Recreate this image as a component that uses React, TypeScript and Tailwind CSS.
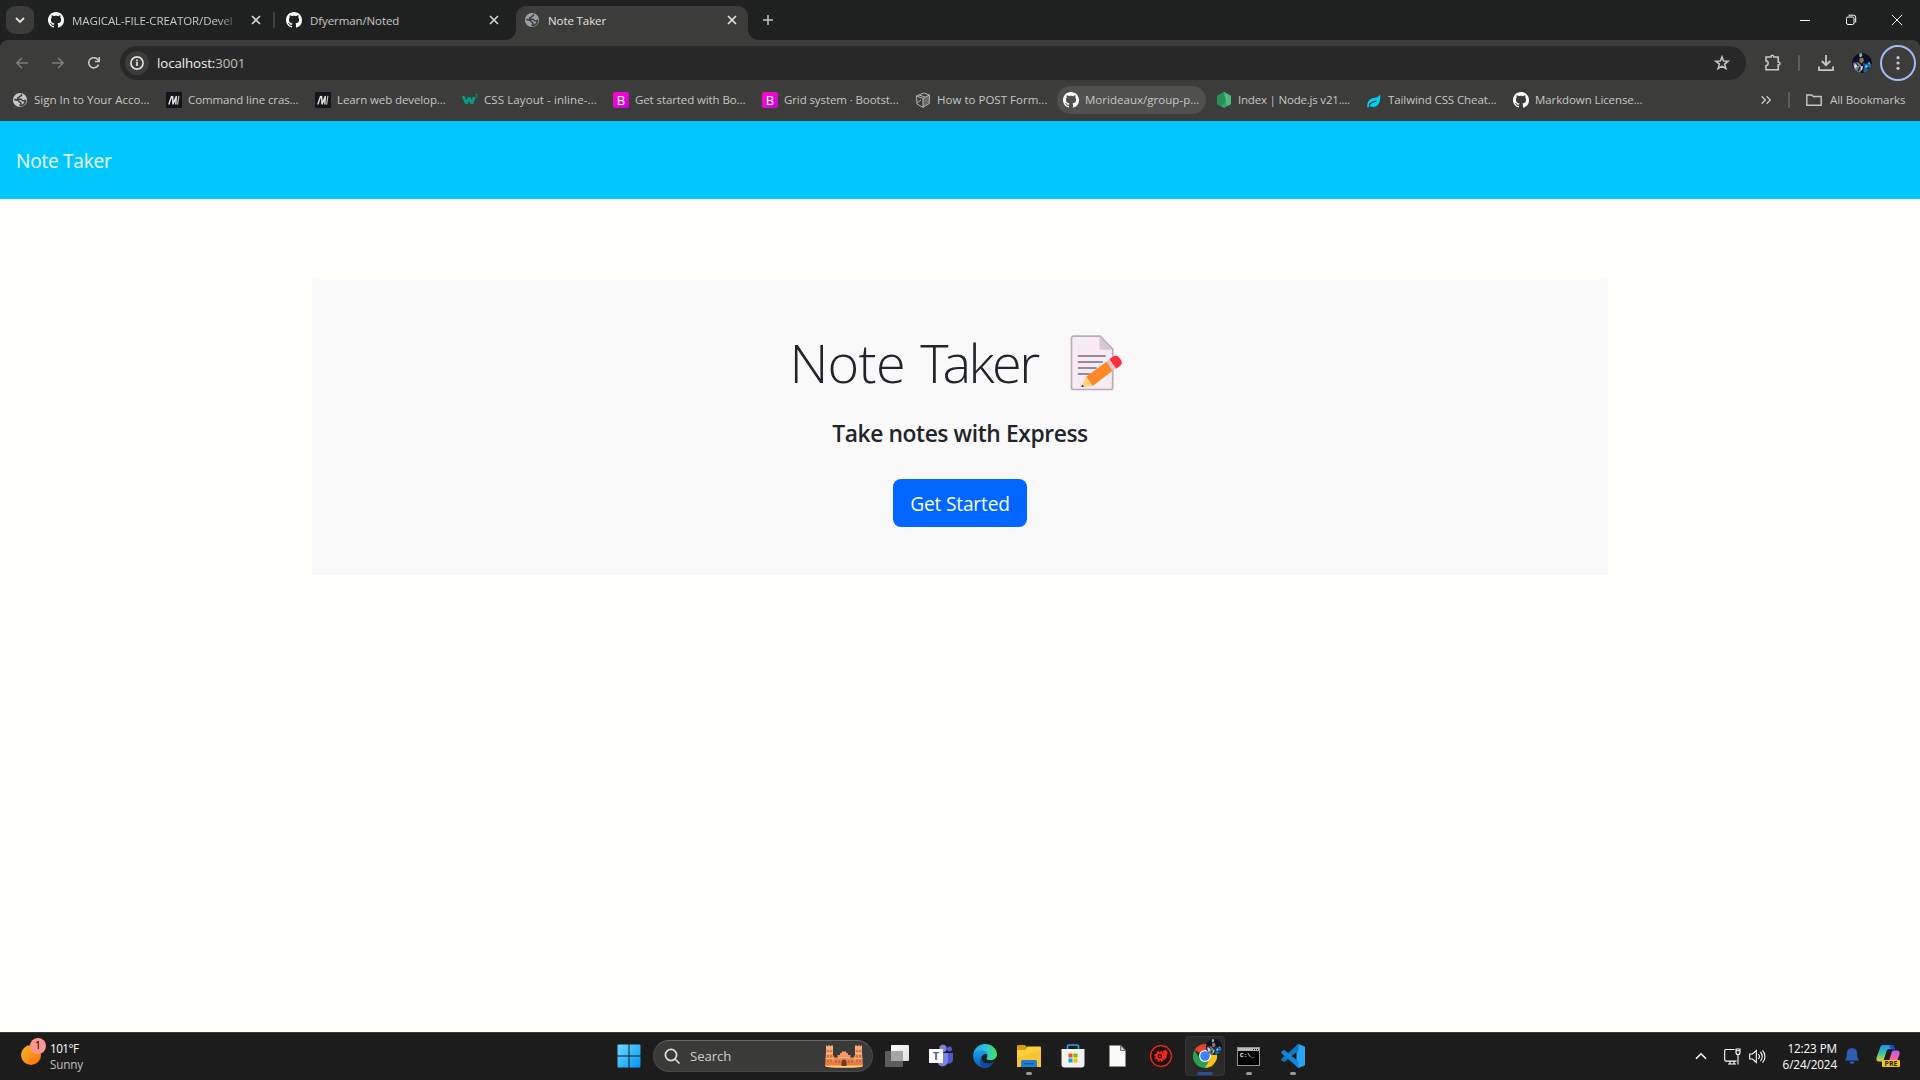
import React from "react";

type P = { className?: string };

const GitHub = ({ className = "" }: P) => (
  <svg viewBox="0 0 16 16" className={`size-4 shrink-0 ${className}`} fill="#fff">
    <path d="M8 0C3.58 0 0 3.58 0 8c0 3.54 2.29 6.53 5.47 7.59.4.07.55-.17.55-.38 0-.19-.01-.82-.01-1.49-2.01.37-2.53-.49-2.69-.94-.09-.23-.48-.94-.82-1.13-.28-.15-.68-.52-.01-.53.63-.01 1.08.58 1.23.82.72 1.21 1.87.87 2.33.66.07-.52.28-.87.51-1.07-1.78-.2-3.64-.89-3.64-3.95 0-.87.31-1.59.82-2.15-.08-.2-.36-1.02.08-2.12 0 0 .67-.21 2.2.82.64-.18 1.32-.27 2-.27s1.36.09 2 .27c1.53-1.04 2.2-.82 2.2-.82.44 1.1.16 1.92.08 2.12.51.56.82 1.27.82 2.15 0 3.07-1.87 3.75-3.65 3.95.29.25.54.73.54 1.48 0 1.07-.01 1.93-.01 2.2 0 .21.15.46.55.38A8.01 8.01 0 0 0 16 8c0-4.42-3.58-8-8-8Z" />
  </svg>
);

const Globe = ({ fill = "#c3c7cb", ink = "#3c3c3b" }: { fill?: string; ink?: string }) => (
  <svg viewBox="0 0 16 16" className="size-4 shrink-0">
    <circle cx="8" cy="8" r="7.1" fill={fill} />
    <path d="M9 2.300c1.200.8.300 1.700-.8 1.900-.9.200-.8 1.500-2 1.600-1 .2-.8 1.400.3 1.400h2.300c1.100 0 .9 1.600 2 1.600.8 0 1.500-.5 2.800-.3-.2 2.200-1.600 4.200-3.700 5H8.200c-.3-1.200 1-1.300.8-2.500-.2-1.100-2-.7-2.300-2C6.400 8 4.500 7.800 2.200 7.600" fill="none" stroke={ink} strokeWidth="1.500" />
  </svg>
);

const Close = ({ color = "#d5d5d3" }: { color?: string }) => (
  <svg viewBox="0 0 10 10" className="size-[10px] shrink-0" stroke={color} strokeWidth="1.6">
    <path d="M1 1l8 8M9 1L1 9" />
  </svg>
);

const Mdn = () => (
  <svg viewBox="0 0 16 16" className="size-4 shrink-0">
    <rect width="16" height="16" fill="#15141a" />
    <path d="M2.800 12.500L5.700 4M6.600 4l.4 8.500M7 12.300L10.500 4M10.300 4l-.5 8.500" stroke="#e8e8e8" strokeWidth="1.400" fill="none" />
    <path d="M12.900 3.800l-1.300 8.800" stroke="#c8c8c8" strokeWidth="1.100" />
  </svg>
);

const W3 = () => (
  <svg viewBox="0 0 16 16" className="size-4 shrink-0" fill="none" stroke="#04a08a">
    <path d="M1 4l3.400 7.500L7 5.500l2.800 6L12.300 5" strokeWidth="2.700" strokeLinejoin="bevel" />
    <path d="M13.300 2.600h2l-1.100 1.500c1.400 0 1.300 1.900-.9 1.600" strokeWidth=".8" />
  </svg>
);

const Boot = () => (
  <span className="flex size-4 shrink-0 items-center justify-center rounded-[2px] bg-linear-to-br from-[#ff00c8] to-[#c800d8] text-[13px] leading-4 font-medium text-white">B</span>
);

const Cube = () => (
  <svg viewBox="0 0 16 16" className="size-4 shrink-0" fill="none" stroke="#b5b5b3" strokeWidth="1" strokeLinejoin="round">
    <path d="M8 6.400l6.500-3.400-.3 8.500L8 15.300z" fill="#6a6a68" stroke="none" />
    <path d="M1.500 4L8.500 1l6 2-.3 8.500-6.200 3.800-6-3.300zM1.500 4L8 6.400l6.500-3.400M8 6.400v8.900M2.500 10.500L6 8M4 3l6 2" />
  </svg>
);

const Node = () => (
  <svg viewBox="0 0 16 16" className="size-4 shrink-0">
    <path d="M8 0l7 4v8l-7 4-7-4V4z" fill="#2ea866" />
    <path d="M8 0l7 4L5 14.300 1 12V4z" fill="#249257" />
    <path d="M8 0l7 4v8l-4 2.300z" fill="#55bb7d" />
  </svg>
);

const Leaf = () => (
  <svg viewBox="0 0 16 16" className="size-4 shrink-0">
    <path d="M14 2.500c1.200 6-1 12.500-7 12.500-1.800 0-3-.5-3.700-1.200L2.200 15.800 1.300 15.200C.8 9.500 4 6.200 8.700 5.800c2.400-.2 4.200-1.200 5.300-3.300z" fill="#00cdf5" />
    <path d="M3 13.500C4.500 11 7 9.600 10.500 9.200" stroke="#303c40" strokeWidth="1.200" fill="none" />
  </svg>
);

const Avatar = ({ className = "" }: P) => (
  <svg viewBox="0 0 20 20" className={className}>
    <defs><clipPath id="av"><circle cx="10" cy="10" r="10" /></clipPath></defs>
    <g clipPath="url(#av)">
      <rect width="20" height="20" fill="#0c1226" />
      <path d="M7.500 0l2-.5.800 3-1.500 2-1.500-1z" fill="#8fb6c4" />
      <path d="M7.500 5.500l3.500-1 1 3.500-2.500 2.500-2-1.500z" fill="#94705a" />
      <path d="M1 10l5-1 3 3 1 4-2 4H3z" fill="#72818e" />
      <path d="M2 12l3-1.500.5 3-2.500 2zM9 13.500l2-.5-.5 3.500-1.500 1z" fill="#d3e2ea" />
      <path d="M11 10l3 1 3-2 3 3-3 6-5 2-1-4z" fill="#24619a" />
      <path d="M13 13l2-1 .5 1.500-1.500 1.500zM16.500 9l1.500 1-1 2z" fill="#8fd4f4" />
      <path d="M4 10l2 3M8 14l-2 4M12 12l-1 5M15 15l3 1" stroke="#1a1b24" strokeWidth="1.200" />
    </g>
  </svg>
);

const marks: { w: string; icon: React.ReactNode; t: string; s?: string; k?: string }[] = [
  { w: "w-[154px]", icon: <Globe />, t: "Sign In to Your Acco...", k: "tracking-[0.02px]" },
  { w: "w-[149px]", icon: <Mdn />, t: "Command line cras..." },
  { w: "w-[147px]", icon: <Mdn />, t: "Learn web develop..." },
  { w: "w-[151px]", icon: <W3 />, t: "CSS Layout - inline-...", k: "tracking-[0.09px]" },
  { w: "w-[149px]", icon: <Boot />, t: "Get started with Bo..." },
  { w: "w-[153px]", icon: <Boot />, t: "Grid system · Bootst..." },
  { w: "w-[148px]", icon: <Cube />, t: "How to POST Form...", k: "tracking-[0.02px]" },
  { w: "w-[153px]", icon: <GitHub />, t: "Morideaux/group-p...", s: "bg-[#50504f]", k: "tracking-[0.03px]" },
  { w: "w-[150px]", icon: <Node />, t: "Index | Node.js v21....", k: "tracking-[-0.2px]" },
  { w: "w-[147px]", icon: <Leaf />, t: "Tailwind CSS Cheat..." },
  { w: "w-[150px]", icon: <GitHub />, t: "Markdown License..." },
];

function TabStrip() {
  return (
    <div className="flex h-10 items-center bg-[#1f2120] text-[11.500px] tracking-[-0.1px] text-[#c8c8c6]">
      <div className="ml-[6px] flex size-7 items-center justify-center rounded-[9px] bg-[#3c3c3b]">
        <svg viewBox="0 0 10 10" className="size-[10px]" fill="none" stroke="#e3e3e1" strokeWidth="1.800"><path d="M1 3l4 4 4-4" /></svg>
      </div>
      <div className="ml-[14px] flex w-[227px] items-center">
        <GitHub />
        <div className="ml-2 w-[167px] pt-px tracking-[-0.1px] whitespace-nowrap mask-r-from-88% mask-r-to-100%">MAGICAL-FILE-CREATOR/Devel</div>
        <div className="ml-3"><Close /></div>
        <div className="ml-auto h-4 w-0.5 rounded bg-[#3f403f]" />
      </div>
      <div className="ml-[10px] flex w-[232px] items-center pl-px">
        <GitHub />
        <div className="ml-2 w-[180px] pt-px">Dfyerman/Noted</div>
        <div className="-ml-px"><Close /></div>
      </div>
      <div className="-ml-[11px] flex h-10 items-end">
        <div className="size-[10px] bg-[radial-gradient(circle_at_0_0,transparent_9.500px,#3c3c3b_10px)]" />
        <div className="flex h-[34px] w-[232px] items-center rounded-t-[10px] bg-[#3c3c3b] pb-[6px] pl-2 text-[#e3e3e1]">
          <Globe fill="#9aa0a6" />
          <div className="ml-2 w-[179px] pt-px">Note Taker</div>
          <Close color="#e6e6e4" />
        </div>
        <div className="size-[10px] bg-[radial-gradient(circle_at_100%_0,transparent_9.500px,#3c3c3b_10px)]" />
      </div>
      <svg viewBox="0 0 10 10" className="ml-[5px] size-[10px]" stroke="#c8c8c6" strokeWidth="1.500"><path d="M5 0v10M0 5h10" /></svg>
      <div className="ml-auto flex gap-9 pr-[18px] text-white">
        <svg viewBox="0 0 10 10" className="size-[10px]" stroke="currentColor" shapeRendering="crispEdges"><path d="M0 5.500h10" /></svg>
        <svg viewBox="0 0 10 10" className="size-[10px] overflow-visible" fill="none" stroke="currentColor"><rect x=".5" y="2" width="7.500" height="7.500" rx="1.500" /><path d="M2.500 0.200H7.500a2.200 2.200 0 0 1 2.200 2.200V7.500" /></svg>
        <svg viewBox="0 0 10 10" className="size-[10px]" stroke="currentColor"><path d="M0 0l10 10M10 0L0 10" /></svg>
      </div>
    </div>
  );
}

function Toolbar() {
  return (
    <div className="flex h-[46px] items-center rounded-t-[8px] bg-[#3c3c3b] text-[#c7c7c5]">
      <svg viewBox="0 0 12 12" className="ml-4 size-3 text-[#7e7e7c]" fill="none" stroke="currentColor" strokeWidth="1.500"><path d="M12 6H1M6 .8L.9 6 6 11.200" /></svg>
      <svg viewBox="0 0 12 12" className="ml-6 size-3 text-[#7e7e7c]" fill="none" stroke="currentColor" strokeWidth="1.500"><path d="M0 6h11M6 .8L11.100 6 6 11.200" /></svg>
      <svg viewBox="0 0 12 12" className="ml-6 size-3" fill="none" stroke="currentColor" strokeWidth="1.600"><path d="M10.600 7.600A5.100 5.100 0 1 1 10 2.800L11 4M11.300 0v4.500H6.800" /></svg>
      <div className="ml-5 flex h-[34px] w-[1626px] items-center rounded-full bg-[#282828]">
        <div className="ml-[5px] flex size-6 items-center justify-center rounded-full bg-[#3c3c3b]">
          <svg viewBox="0 0 14 14" className="size-[14px]" fill="none" stroke="#e3e3e1" strokeWidth="1.600"><circle cx="7" cy="7" r="6.100" /><path d="M7 6v4M7 3.600v1.600" strokeWidth="1.700" /></svg>
        </div>
        <div className="ml-2 pt-px text-[13.300px] tracking-[-0.100px] text-[#f0f0ee]">localhost:<span className="text-[#c0c0be]">3001</span></div>
        <svg viewBox="0 0 16 16" className="mr-4 ml-auto size-4" fill="none" stroke="currentColor" strokeWidth="1.500"><path d="M8 1.800l1.600 4.200 4.600.2-3.600 2.900 1.300 4.500L8 11.100l-3.900 2.500 1.300-4.500L1.800 6.200l4.600-.2z" /></svg>
      </div>
      <svg viewBox="0 0 18 18" className="ml-[18px] size-[18px]" fill="none" stroke="currentColor" strokeWidth="1.600"><path d="M2 3h5c0-2.400 2.800-2.400 2.800 0H14.200V8c2.400 0 2.400 2.800 0 2.800V15.700H2v-4c2.900-.4 2.900-4.400 0-4.800z" /></svg>
      <div className="ml-[16px] h-4 w-0.5 rounded bg-[#5f5f5e]" />
      <svg viewBox="0 0 16 16" className="ml-[18px] size-4" fill="none" stroke="currentColor" strokeWidth="1.800"><path d="M8 0v10M3.800 6L8 10.200 12.200 6M1 11.500v3.600h14v-3.600" /></svg>
      <Avatar className="ml-[18px] size-5" />
      <div className="ml-2 flex size-9 items-center justify-center rounded-full border-2 border-[#9fbdf4]">
        <svg viewBox="0 0 4 14" className="h-[14px] w-1" fill="currentColor"><circle cx="2" cy="1.700" r="1.600" /><circle cx="2" cy="7" r="1.600" /><circle cx="2" cy="12.300" r="1.600" /></svg>
      </div>
    </div>
  );
}

function Bookmarks() {
  return (
    <div className="flex h-[35px] items-start bg-[#3c3c3b] pl-[6px] text-[11.500px] tracking-[-0.1px] text-[#c7c7c5]">
      {marks.map((m) => (
        <div key={m.t} className={`${m.w} shrink-0`}>
          <div className={`flex h-7 w-[149px] items-center gap-[6px] rounded-full pl-[6px] whitespace-nowrap ${m.s ?? ""}`}>
            {m.icon}
            <span className={m.k}>{m.t}</span>
          </div>
        </div>
      ))}
      <div className="ml-auto flex h-7 items-center pr-[15px]">
        <svg viewBox="0 0 10 8" className="h-2 w-[10px]" fill="none" stroke="currentColor" strokeWidth="1.400"><path d="M.6.3L4.300 4 .6 7.700M5.600.3L9.300 4 5.600 7.700" /></svg>
        <div className="ml-[17px] h-4 w-0.5 rounded bg-[#5f5f5e]" />
        <svg viewBox="0 0 16 12" className="ml-4 h-3 w-4" fill="none" stroke="currentColor" strokeWidth="1.400"><path d="M.8 1h5l1.500 1.500h7.900v8.700H.8z" /></svg>
        <span className="ml-2 w-[75px] whitespace-nowrap">All Bookmarks</span>
      </div>
    </div>
  );
}

function Memo() {
  return (
    <svg viewBox="0 0 52 56" className="h-14 w-[52px]">
      <path d="M3.500 1.200h26.500L42.700 14v38.500a2 2 0 0 1-2 2H3.500a2 2 0 0 1-2-2V3.200a2 2 0 0 1 2-2z" fill="#f5edf3" stroke="#bda9b7" strokeWidth="1.700" />
      <path d="M29.500 2l12.500 12.800H31.500a2 2 0 0 1-2-2z" fill="#d8c8d5" />
      <path d="M8.500 21H35M8.500 27H32M8.500 33H26M8.500 39H20" stroke="#9d879a" strokeWidth="1.800" strokeLinecap="round" />
      <path d="M37.500 26L16 41.800l6.500 9.300L43.500 35.300z" fill="#ff8826" />
      <path d="M16 41.800L11.300 52l11.200-.9z" fill="#ffd080" />
      <path d="M12.300 49.500L11.300 52l2.900-.2z" fill="#402a32" />
      <path d="M36.500 26.700l3-2.400 6.300 9-3.300 2.600z" fill="#d3cbd2" />
      <path d="M39.500 24.300l3.600-2.700c2-1.500 4.800-1 6.400 1.300l1.500 2.200c1.400 2 .9 4.400-.8 5.600l-3.900 3z" fill="#ff2d3a" />
    </svg>
  );
}

const Slot = ({ children, dot, active }: { children: React.ReactNode; dot?: boolean; active?: boolean }) => (
  <div className="flex w-11 justify-center">
    <div className={`relative flex size-10 items-center justify-center rounded-[4px] ${active ? "border border-[#343434] bg-[#2a2a2a]" : ""}`}>
      {children}
      {dot && <div className="absolute bottom-px h-[3px] w-[6px] rounded-full bg-[#9a9a9a]" />}
      {active && <div className="absolute bottom-0 h-[3px] w-4 rounded-full bg-[#2e4f91]" />}
    </div>
  </div>
);

function Gate() {
  return (
    <svg viewBox="0 0 40 24" className="h-6 w-10">
      <defs><linearGradient id="gt" x1="0" y1="0" x2="0" y2="1"><stop offset="0" stopColor="#ffb47e" /><stop offset="1" stopColor="#e9743f" /></linearGradient></defs>
      <path d="M1 22L2 8V1l1.500 1.500L5 1l1.500 1.500L8 1l1 1v9l1.500 2.500h3V11h2.500V9.500l2-1V7.500h4v1l2 1V11H26.500v2.500h3L31 11V2l1-1 1.500 1.500L35 1l1.500 1.500L38 1v7l1 14z" fill="url(#gt)" />
      <path d="M1 21.500h38c0 1.500-3 2.300-19 2.300S1 23 1 21.500z" fill="#ffd66f" />
      <path d="M17.500 22v-4a2.500 2.500 0 0 1 5 0V22z" fill="#6b3a2e" />
      <path d="M4 6v2M7 6v2M4 11v2M7 11v2M33 6v2M36 6v2M33 11v2M36 11v2M4 16v2M7 16v2M33 16v2M36 16v2M12 16v3M28 16v3M15 16v3M25 16v3" stroke="#a54c2c" strokeWidth="1" />
      <path d="M2 9.500h7M31 9.500h7M1.500 14.500H10M30 14.500h8.500M15 13.500h10" stroke="#ffc496" strokeWidth=".8" />
    </svg>
  );
}

function Taskbar() {
  return (
    <div className="flex h-12 border-t border-[#3b3b3b] bg-[#1c1c1c] pb-px text-white">
      <div className="flex w-[606px] items-center pl-[21px]">
        <div className="relative mt-[-3px] size-5 rounded-full bg-linear-to-br from-[#eeb829] to-[#ff6a00]">
          <div className="absolute -top-[7px] left-[9px] flex size-4 items-center justify-center rounded-full bg-[#ff968d] text-[11px] text-black">1</div>
        </div>
        <div className="ml-[9px] pb-px text-[11.700px] leading-4 tracking-[-0.15px]"><div className="tracking-[-0.5px]">101°F</div><div className="text-[#c0c0c0]">Sunny</div></div>
      </div>
      <div className="flex items-center">
        <Slot>
          <svg viewBox="0 0 24 24" className="ml-px size-6"><defs><linearGradient id="wn" x1="0" y1="0" x2="1" y2="1"><stop offset="0" stopColor="#6bdcff" /><stop offset="1" stopColor="#0092f8" /></linearGradient></defs><path d="M.5 1.500a1 1 0 0 1 1-1H11.500V11.500H.5zM12.500.5h10a1 1 0 0 1 1 1v10h-11zM.5 12.500h11v11h-10a1 1 0 0 1-1-1zM12.500 12.500h11v10a1 1 0 0 1-1 1h-10z" fill="url(#wn)" /></svg>
        </Slot>
        <div className="ml-[3px] flex h-8 w-[220px] items-center rounded-full border border-[#4b4b4b] border-t-[#666] bg-[#3a3a39] pl-[10px]">
          <svg viewBox="0 0 16 16" className="size-4" fill="none" stroke="#dedede" strokeWidth="1.700"><circle cx="7" cy="7" r="5.600" /><path d="M11 11l4 4" strokeLinecap="round" /></svg>
          <span className="ml-[10px] pt-px text-[13.200px] tracking-[-0.1px] text-[#cfcfcd]">Search</span>
          <div className="mr-2 ml-auto"><Gate /></div>
        </div>
        <div className="ml-[2px] flex">
          <Slot><svg viewBox="0 0 24 22" className="h-[22px] w-6"><defs><linearGradient id="tv" x1="0" y1="0" x2="1" y2="1"><stop offset="0" stopColor="#fff" /><stop offset="1" stopColor="#dcdcda" /></linearGradient></defs><rect x="6" width="18" height="16" rx="1" fill="url(#tv)" /><rect y="6" width="18" height="16" rx="1" fill="#5d5d5c" /><path d="M6 6h12v10H6z" fill="#a5a5a3" /></svg></Slot>
          <Slot>
            <div className="relative size-6">
              <svg viewBox="0 0 24 24" className="size-6"><circle cx="14" cy="4.500" r="3.700" fill="#7b83eb" /><circle cx="20.500" cy="5" r="2.500" fill="#5059c9" /><path d="M17 9h7v7a4 4 0 0 1-6 3z" fill="#5059c9" /><path d="M9 9h10v8a5.500 5.500 0 0 1-10 3z" fill="#7b83eb" /><rect y="5" width="14" height="14" fill="#fff" /></svg>
              <span className="absolute top-[5px] left-0 w-[14px] text-center text-[11px] leading-[14px] font-bold text-[#5059b9]">T</span>
            </div>
          </Slot>
          <Slot><svg viewBox="0 0 24 24" className="size-6"><defs><linearGradient id="e1" x1="0" x2="1"><stop offset="0" stopColor="#25a7ea" /><stop offset=".55" stopColor="#2cc7d7" /><stop offset="1" stopColor="#4ae052" /></linearGradient><linearGradient id="e2" x1="0" y1="0" x2="0" y2="1"><stop offset="0" stopColor="#1aa0e2" /><stop offset="1" stopColor="#0b59b8" /></linearGradient></defs><path d="M.2 10.500C1 4.500 6 0 12 0c7 0 12 5 12 10.300 0 3.700-2.900 5.900-6 5.900-3 0-4.600-.9-4.600-1.700 0-.6 1-1.100 1-3 0-2.400-2.400-4.600-6-4.600-4.300 0-7 2-8.200 3.600z" fill="url(#e1)" /><path d="M.2 10.500C1.500 7.700 4.700 6 8.300 6c3.700 0 6.200 2.400 6.200 4.800-2-2-5.900-.4-5.900 3.200 0 4.500 5 7.300 12 4.300C18.500 21.700 15.500 24 12 24 5.400 24-.5 18.500.2 10.500z" fill="url(#e2)" /><path d="M8.600 14c0 4.500 5.400 7.300 12 4.300-2.100 4.300-6.600 5.700-9 5.700C7 22 5.500 14.500 9.800 11.300 9 12 8.600 13 8.600 14z" fill="#0f4aa0" /></svg></Slot>
          <Slot dot><svg viewBox="0 0 24 22" className="h-[22px] w-6"><path d="M0 1a1 1 0 0 1 1-1h7l2 2-2 4H0z" fill="#d99a0c" /><path d="M0 5h8l2.500-3.500H23a1 1 0 0 1 1 1V22H0z" fill="#ffcf3f" /><path d="M0 22V13L24 5v17z" fill="#f5bd2b" opacity=".6" /><path d="M4 22v-5.500A1.500 1.500 0 0 1 5.500 15h13a1.500 1.500 0 0 1 1.500 1.500V22z" fill="#1a80d4" /><path d="M7.500 18.700h9" stroke="#0d5799" strokeWidth="1.300" /></svg></Slot>
          <Slot><svg viewBox="0 0 24 24" className="size-6"><path d="M6.500 7V2.200A1.200 1.200 0 0 1 7.700 1h8.600a1.200 1.200 0 0 1 1.200 1.200V7" fill="none" stroke="#29a5ee" strokeWidth="1.700" /><path d="M.5 5h23v15.500a3 3 0 0 1-3 3h-17a3 3 0 0 1-3-3z" fill="#f2f2f0" /><path d="M7.500 9.500h4v4h-4z" fill="#f25022" /><path d="M12.500 9.500h4v4h-4z" fill="#7fba00" /><path d="M7.500 14.500h4v4h-4z" fill="#00a4ef" /><path d="M12.500 14.500h4v4h-4z" fill="#ffb900" /></svg></Slot>
          <Slot><svg viewBox="0 0 17 22" className="h-[22px] w-[17px]"><path d="M.5.500H12L16.500 5V21.500H.5z" fill="#fbfbf7" stroke="#8b8b86" strokeWidth=".7" /><path d="M11.500.5V5.500h5z" fill="#ccc" stroke="#555" strokeWidth=".8" /></svg></Slot>
          <Slot>
            <svg viewBox="0 0 24 24" className="size-6">
              <circle cx="12" cy="12" r="10.400" fill="#1b1110" stroke="#f42a14" strokeWidth="1.300" />
              <circle cx="10.800" cy="12.300" r="4.800" fill="none" stroke="#f42a14" strokeWidth="1.500" strokeDasharray="2.200 1.570" />
              <circle cx="10.800" cy="12.300" r="3.200" fill="none" stroke="#f42a14" strokeWidth="2" />
              <circle cx="10.800" cy="12.300" r="1" fill="#f42a14" />
              <path d="M13.500 7.500L16.500 5.500l2.800 4.200h-1.600c.6 3-.6 5.500-3.300 6.500l-.4-2 1-3z" fill="#f42a14" />
            </svg>
          </Slot>
          <Slot active>
            <svg viewBox="0 0 24 24" className="size-6"><path d="M12 12L1.600 6A12 12 0 0 1 22.400 6z" fill="#ea4335" /><path d="M12 12V6h10.400A12 12 0 0 1 12 24z" fill="#fbc116" /><path d="M1.600 6A12 12 0 0 0 12 24l5.200-9H6.800z" fill="#2ba14b" /><circle cx="12" cy="12" r="6" fill="#fff" /><circle cx="12" cy="12" r="4.800" fill="#3b83f6" /></svg>
            <Avatar className="absolute top-[2px] right-[2px] size-4" />
          </Slot>
          <Slot dot>
            <div className="mr-px flex h-[19px] w-[23px] flex-col border border-[#949494] bg-black">
              <div className="flex h-[3px] shrink-0 items-center justify-end gap-px bg-[#b9b9b9] pr-px"><i className="size-px bg-black" /><i className="size-px bg-black" /><i className="size-px bg-black" /></div>
              <div className="pl-[2px] font-['Liberation_Mono'] text-[6px] leading-[9px] font-bold whitespace-nowrap">C:\_</div>
            </div>
          </Slot>
          <Slot dot><svg viewBox="0 0 24 24" className="size-6"><path d="M17.500 0L24 2.800v18.400L17.500 24l-2-1.500V1.500z" fill="#2aa5f3" /><path d="M17.500 0v6.500L3.300 18 .3 16.500v-1.800z" fill="#1077c0" /><path d="M17.500 24v-6.500L3.300 6 .3 7.500v1.800z" fill="#1488d6" /></svg></Slot>
        </div>
      </div>
      <div className="ml-auto flex items-center pr-5">
        <svg viewBox="0 0 12 8" className="h-2 w-3" fill="none" stroke="#fff" strokeWidth="1.600"><path d="M1 6.800l5-5 5 5" /></svg>
        <svg viewBox="0 0 17 17" className="ml-[17px] size-[17px]" fill="none" stroke="#fff" strokeWidth="1.100"><path d="M10.500 1.500H2A1.300 1.300 0 0 0 .7 2.800v9A1.300 1.300 0 0 0 2 13.100h10.500M4 16h8M6 13v3M10 13v3" /><path d="M12 1h4v3.500a2 2 0 0 1-4 0zM14 6.500V16.500M12 2.800h4" /></svg>
        <svg viewBox="0 0 17 15" className="ml-2 h-[15px] w-[17px]" fill="none" stroke="#fff" strokeWidth="1.100"><path d="M.7 5h2.800l3.800-3.500v12L3.500 10H.7z" /><path d="M9.300 5a3.700 3.700 0 0 1 0 5M11.400 3a6.400 6.400 0 0 1 0 9M13.500 1.300a9 9 0 0 1 0 12.400" /></svg>
        <div className="ml-[12px] w-[59px] pb-px text-right text-[11.700px] leading-4 tracking-[-0.1px] whitespace-nowrap"><div>12:23 PM</div><div>6/24/2024</div></div>
        <svg viewBox="0 0 14 16" className="ml-2 h-4 w-[14px]" fill="#2f5db3"><path d="M7 0a5.200 5.200 0 0 1 5.200 5.200v3.600L14 12.500H0l1.800-3.700V5.200A5.200 5.200 0 0 1 7 0zM4.500 13.500h5a2.500 2.500 0 0 1-5 0z" /></svg>
        <div className="relative ml-[17px] size-6">
          <svg viewBox="0 0 24 24" className="size-6"><defs><linearGradient id="c1" x1="0" y1="0" x2="0" y2="1"><stop offset="0" stopColor="#1e8ff5" /><stop offset=".5" stopColor="#38c5a0" /><stop offset="1" stopColor="#e8d028" /></linearGradient><linearGradient id="c2" x1="0" y1="0" x2="0" y2="1"><stop offset="0" stopColor="#b75cf5" /><stop offset=".5" stopColor="#ff5ea5" /><stop offset="1" stopColor="#ff9a4a" /></linearGradient></defs><path d="M7 1h8.500c2 0 2.500 2 3 4H13c-2 0-2.500 2-3 4l-2 6c-.6 2-1.500 2.500-3 2.500H3c-2.500 0-3-2-2.500-4L4 4c.5-2 1.500-3 3-3z" fill="url(#c1)" /><path d="M17 23H9c-2 0-2.500-1-3-3h4c2 0 2.700-2 3.300-4l2.200-7c.6-2 1.500-2.500 3-2.500H21c2.500 0 3 2 2.500 4L20 20c-.5 2-1.500 3-3 3z" fill="url(#c2)" /><path d="M13 1h3c2 0 2 2 3 4.500h-4z" fill="#1b4fd8" /></svg>
          <span className="absolute top-[16px] left-[6px] flex h-[7px] w-[18px] items-center justify-center rounded-[1px] bg-[#f2c811] text-[7px] leading-none font-bold text-[#222]">PRE</span>
        </div>
      </div>
    </div>
  );
}

export default function App() {
  return (
    <div className="flex h-[1080px] w-[1920px] flex-col overflow-hidden bg-[#fffffc] font-['Open_Sans','Noto_Sans',sans-serif]">
      <div className="bg-[#1f2120]">
        <TabStrip />
        <Toolbar />
        <Bookmarks />
      </div>
      <nav className="flex h-[78px] items-center bg-[#00c8ff] pt-[3px] pl-4 text-[19.200px] tracking-[-0.3px] text-[#f2faff]">Note Taker</nav>
      <main className="flex-1 pt-20">
        <section className="mx-auto flex h-[296px] w-[1296px] flex-col items-center bg-[#f9f9fa] pt-12 text-[#212529]">
          <h1 className="flex h-[67px] items-center gap-[32px] pt-[4px] pr-[9px] text-[54px] font-light whitespace-nowrap">
            <span className="tracking-[-2.600px] [word-spacing:2px]">
              <span className="tracking-[-0.700px]">Note </span><span className="tracking-[-6px]">T</span>aker
            </span>
            <Memo />
          </h1>
          <h4 className="mt-[25px] text-[22.800px] leading-[29px] font-semibold tracking-[-0.400px] whitespace-nowrap">Take notes with Express</h4>
          <button className="mt-[31px] h-12 w-[134px] rounded-[8px] bg-[#0066ff] pt-[2px] text-[19.200px] tracking-[-0.2px] whitespace-nowrap text-[#f8fbff]">Get Started</button>
        </section>
      </main>
      <Taskbar />
    </div>
  );
}
